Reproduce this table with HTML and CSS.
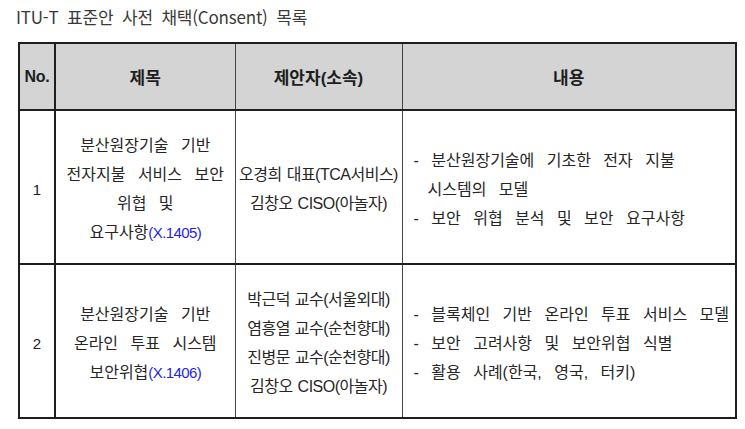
FILE: index.html
```html
<!DOCTYPE html>
<html lang="ko">
<head>
<meta charset="utf-8">
<title>ITU-T 표준안 사전 채택(Consent) 목록</title>
<link rel="stylesheet" href="styles.css">
</head>
<body>
<div class="title">ITU-T 표준안 사전 채택(Consent) 목록</div>
<table class="consent">
  <colgroup>
    <col class="c-no">
    <col class="c-title">
    <col class="c-author">
    <col class="c-desc">
  </colgroup>
  <thead>
    <tr class="head">
      <th class="no">No.</th>
      <th>제목</th>
      <th>제안자(소속)</th>
      <th>내용</th>
    </tr>
  </thead>
  <tbody>
    <tr class="row1">
      <td class="no"><div class="shift">1</div></td>
      <td class="ttl"><div class="shift">분산원장기술 기반<br>전자지불 서비스 보안<br>위협 및<br>요구사항<span class="code">(X.1405)</span></div></td>
      <td class="auth"><div class="shift">오경희 대표(TCA서비스)<br>김창오 CISO(아놀자)</div></td>
      <td class="desc">
        <div class="shift">
          <div class="item">- 분산원장기술에 기초한 전자 지불<br>시스템의 모델</div>
          <div class="item">- 보안 위협 분석 및 보안 요구사항</div>
        </div>
      </td>
    </tr>
    <tr class="row2">
      <td class="no"><div class="shift">2</div></td>
      <td class="ttl"><div class="shift">분산원장기술 기반<br>온라인 투표 시스템<br>보안위협<span class="code">(X.1406)</span></div></td>
      <td class="auth"><div class="shift">박근덕 교수(서울외대)<br>염흥열 교수(순천향대)<br>진병문 교수(순천향대)<br>김창오 CISO(아놀자)</div></td>
      <td class="desc">
        <div class="shift">
          <div class="item">- 블록체인 기반 온라인 투표 서비스 모델</div>
          <div class="item">- 보안 고려사항 및 보안위협 식별</div>
          <div class="item">- 활용 사례(한국, 영국, 터키)</div>
        </div>
      </td>
    </tr>
  </tbody>
</table>
</body>
</html>
```

FILE: styles.css
```css
html, body {
  margin: 0;
  padding: 0;
  background: #ffffff;
}

body {
  width: 745px;
  height: 429px;
  overflow: hidden;
  font-family: "Liberation Sans", "Noto Sans CJK KR", sans-serif;
  color: #262626;
}

.title {
  padding: 7px 0 0 16px;
  font-family: "Noto Sans CJK KR", "Liberation Sans", sans-serif;
  font-size: 17px;
  line-height: 20px;
  word-spacing: 4px;
  letter-spacing: -0.2px;
  color: #3a3a3a;
}

.consent {
  margin: 15px 0 0 18px;
  border-collapse: collapse;
  table-layout: fixed;
  width: 719px;
  border: 2px solid #1e1e1e;
}

.c-no { width: 36px; }
.c-title { width: 180px; }
.c-author { width: 167px; }
.c-desc { width: 334px; }

.consent th,
.consent td {
  border: 1px solid #444444;
  padding: 0;
  vertical-align: middle;
}

.consent .no {
  border-right: 2px solid #1e1e1e;
  text-align: center;
}

.head th {
  height: 65px;
  background: #d4d4d4;
  font-family: "Liberation Sans", "Noto Sans CJK KR", sans-serif;
  font-weight: bold;
  font-size: 17px;
  color: #1e1e1e;
  text-align: center;
  border-bottom: 2px solid #1e1e1e;
}

.head th.no {
  font-size: 16px;
  letter-spacing: -0.3px;
}

.row1 td { height: 152px; }
.row2 td { height: 152px; }

.row1 td {
  border-bottom: 2px solid #1e1e1e;
}

tbody td {
  font-size: 16px;
  line-height: 29px;
  word-spacing: 8px;
}

.shift {
  margin-top: 4px;
}

tbody td.no {
  font-size: 15px;
  color: #222222;
}

.ttl {
  text-align: center;
  white-space: nowrap;
}

.code {
  color: #1f1fe8;
  word-spacing: 0;
  letter-spacing: -0.6px;
  font-size: 15px;
}

.auth {
  text-align: center;
  word-spacing: 1px;
  letter-spacing: -0.5px;
  white-space: nowrap;
}

.desc {
  padding-left: 25px !important;
  white-space: nowrap;
}

.item {
  text-indent: -14px;
}
```
